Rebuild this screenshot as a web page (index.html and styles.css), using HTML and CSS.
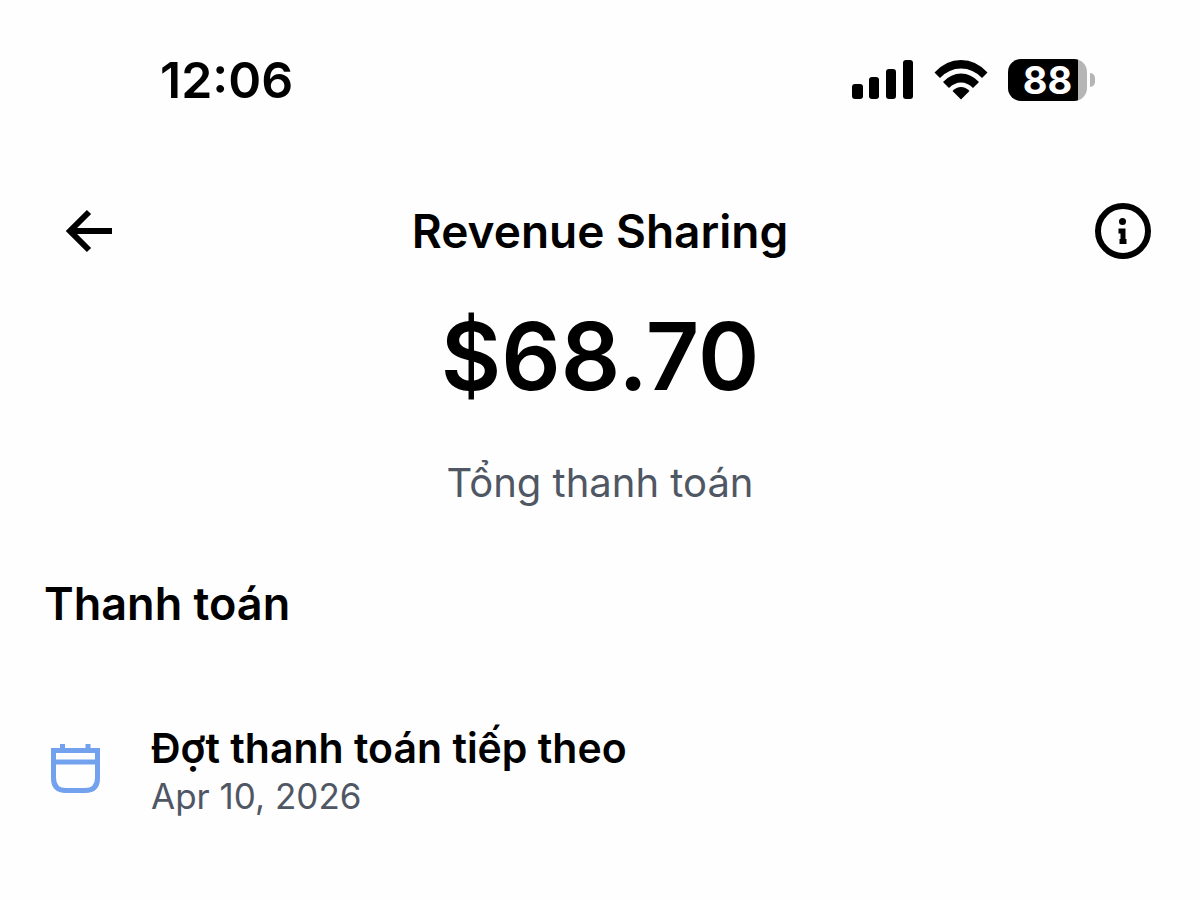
FILE: index.html
```html
<!DOCTYPE html>
<html lang="vi">
<head>
    <meta charset="UTF-8">
    <meta name="viewport" content="width=device-width, initial-scale=1.0">
    <title>Revenue Sharing</title>
    <link rel="stylesheet" href="styles.css">
</head>
<body>

<div class="status-bar">
    <span class="time">12:06</span>
    <div class="status-icons">
        <svg width="62" height="40" viewBox="0 0 62 40" aria-hidden="true">
            <rect x="0" y="24" width="11" height="15" rx="3"/>
            <rect x="17" y="17" width="10" height="22" rx="3"/>
            <rect x="34" y="9" width="10" height="30" rx="3"/>
            <rect x="51" y="0" width="10" height="39" rx="3"/>
        </svg>
        <svg width="54" height="40" viewBox="0 0 54 40" aria-hidden="true">
            <path d="M0.500 12.500Q12 0 27 0T53.500 12.500L48 18Q39 8.500 27 8.500T6 18Z"/>
            <path d="M9 22Q17 13.500 27 13.500T45 22L39 28Q33.500 22.500 27 22.500T15 28Z"/>
            <path d="M18.500 31Q22.500 27 27 27T35.500 31L27 39.500Z"/>
        </svg>
        <div class="battery">
            <div class="battery-body"><span class="battery-level">88</span></div>
            <div class="battery-tip"></div>
        </div>
    </div>
</div>

<header class="header">
    <button type="button" class="icon-btn" aria-label="Quay lại">
        <svg width="80" height="56" viewBox="0 0 80 56" fill="none" stroke="#000" stroke-width="6">
            <path d="M40 9L21 28L40 47M21 28H63"/>
        </svg>
    </button>
    <h1>Revenue Sharing</h1>
    <button type="button" class="icon-btn info-btn" aria-label="Thông tin">
        <svg width="56" height="56" viewBox="0 0 56 56">
            <circle cx="28" cy="28" r="25" fill="none" stroke="#000" stroke-width="6"/>
            <circle cx="27.500" cy="18.500" r="3.500"/>
            <path d="M23.500 25.500H30.500V36H31.500V41H24.500V36H25.500V30.500H23.500Z"/>
        </svg>
    </button>
</header>

<main>
    <section class="total">
        <p class="amount">$68.70</p>
        <p class="total-label">Tổng thanh toán</p>
    </section>

    <section class="payments">
        <h2>Thanh toán</h2>
        <div class="payment">
            <svg class="calendar" width="50" height="50" viewBox="0 0 50 50" fill="none" stroke="#72a2ee" stroke-width="5" aria-hidden="true">
                <path d="M2.500 6.500H46.500V34Q46.500 46.500 34 46.500H15Q2.500 46.500 2.500 34Z"/>
                <path d="M2.500 18H46.500M11.500 0V6M37 0V6"/>
            </svg>
            <div>
                <h3>Đợt thanh toán tiếp theo</h3>
                <p class="date">Apr 10, 2026</p>
            </div>
        </div>
    </section>
</main>

</body>
</html>
```

FILE: styles.css
```css
* {
    box-sizing: border-box;
}
body {
    margin: 0;
    background-color: #fefefe;
    color: #000;
    font-family: Inter, "Liberation Sans", sans-serif;
}
h1, h2, h3, p {
    margin: 0;
}
svg {
    display: block;
}
.status-bar {
    display: flex;
    justify-content: space-between;
    align-items: center;
    height: 160px;
    padding: 0 105px 0 160px;
}
.time {
    font-size: 50px;
    font-weight: 600;
}
.status-icons {
    display: flex;
    align-items: center;
    gap: 20px;
}
.battery {
    display: flex;
    align-items: center;
    gap: 3px;
}
.battery-body {
    width: 79px;
    height: 42px;
    border-radius: 13px;
    background: linear-gradient(to right, #000 70px, #b5b5b5 70px);
    color: #fff;
    text-align: center;
}
.battery-level {
    font-size: 38px;
    font-weight: 700;
    line-height: 42px;
}
.battery-tip {
    width: 5px;
    height: 14px;
    border-radius: 0 7px 7px 0;
    background-color: #b5b5b5;
}
.header {
    display: grid;
    grid-template-columns: 1fr auto 1fr;
    align-items: center;
    padding: 43px 49px 41px;
}
.icon-btn {
    justify-self: start;
    padding: 0;
    border: none;
    background: none;
    cursor: pointer;
}
.info-btn {
    justify-self: end;
}
h1 {
    font-size: 46px;
    font-weight: 600;
    line-height: 54px;
}
.total {
    text-align: center;
}
.amount {
    font-size: 93px;
    font-weight: 600;
    line-height: 112px;
}
.total-label {
    margin-top: 43px;
    color: #505764;
    font-size: 40px;
    line-height: 56px;
}
.payments {
    padding: 65px 44px;
}
h2 {
    font-size: 45px;
    font-weight: 600;
    line-height: 56px;
}
.payment {
    display: flex;
    align-items: center;
    gap: 50px;
    margin-top: 92px;
    padding-left: 7px;
}
.calendar {
    margin-bottom: 6px;
}
h3 {
    font-size: 41px;
    font-weight: 600;
    line-height: 48px;
}
.date {
    color: #505764;
    font-size: 35px;
    line-height: 48px;
}
```
